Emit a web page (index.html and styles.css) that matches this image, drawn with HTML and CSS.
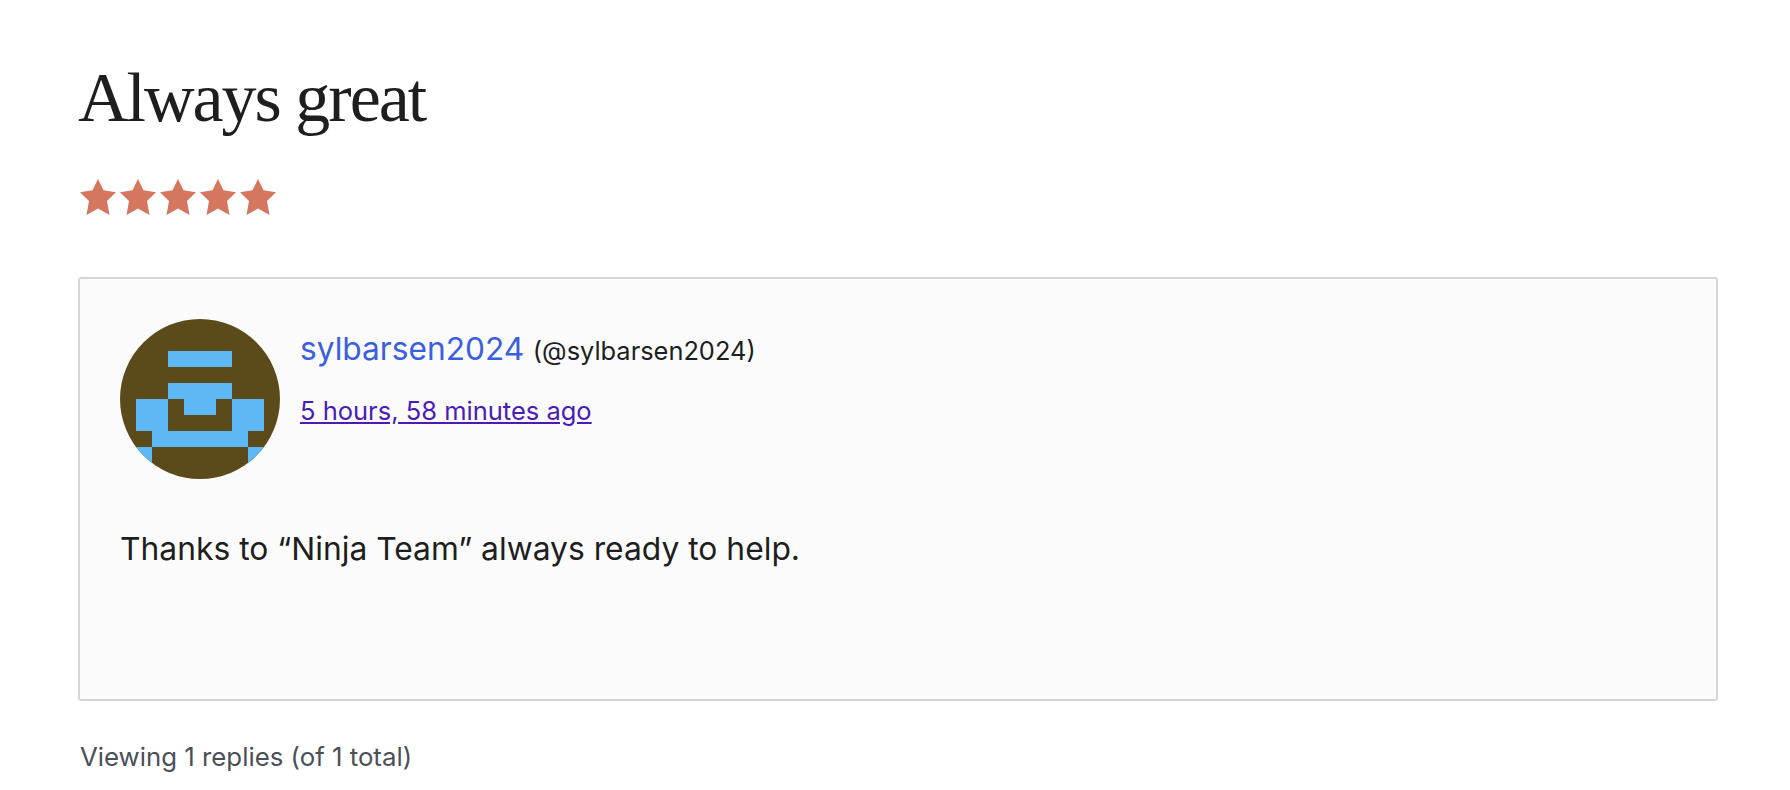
FILE: index.html
```html
<!DOCTYPE html>
<html lang="en">
<head>
    <meta charset="UTF-8">
    <meta name="viewport" content="width=device-width, initial-scale=1.0">
    <title>Always great</title>
    <link rel="stylesheet" href="styles.css">
</head>
<body>
    <div class="topic">
        <h1 class="topic-title">Always great</h1>
        <div class="stars">
            <svg class="star" viewBox="0 0 36 36"><path d="M18 0L23.5 11.2 36 13.2 27 22 29.5 36 18 29.5 6.5 36 9 22 0 13.2 12.5 11.2z"/></svg>
            <svg class="star" viewBox="0 0 36 36"><path d="M18 0L23.5 11.2 36 13.2 27 22 29.5 36 18 29.5 6.5 36 9 22 0 13.2 12.5 11.2z"/></svg>
            <svg class="star" viewBox="0 0 36 36"><path d="M18 0L23.5 11.2 36 13.2 27 22 29.5 36 18 29.5 6.5 36 9 22 0 13.2 12.5 11.2z"/></svg>
            <svg class="star" viewBox="0 0 36 36"><path d="M18 0L23.5 11.2 36 13.2 27 22 29.5 36 18 29.5 6.5 36 9 22 0 13.2 12.5 11.2z"/></svg>
            <svg class="star" viewBox="0 0 36 36"><path d="M18 0L23.5 11.2 36 13.2 27 22 29.5 36 18 29.5 6.5 36 9 22 0 13.2 12.5 11.2z"/></svg>
        </div>
        <div class="reply">
            <div class="reply-head">
                <svg class="avatar" viewBox="0 0 10 10" shape-rendering="crispEdges">
                    <rect width="10" height="10" fill="#5c4b1a"/>
                    <g fill="#5eb8f5">
                        <rect x="3" y="2" width="4" height="1"/>
                        <rect x="3" y="4" width="4" height="1"/>
                        <rect x="1" y="5" width="2" height="2"/>
                        <rect x="4" y="5" width="2" height="1"/>
                        <rect x="7" y="5" width="2" height="2"/>
                        <rect x="2" y="7" width="6" height="1"/>
                        <rect x="1" y="8" width="1" height="1"/>
                        <rect x="8" y="8" width="1" height="1"/>
                    </g>
                </svg>
                <div class="reply-meta">
                    <div class="author">
                        <a class="author-name" href="#">sylbarsen2024</a>
                        <span class="author-handle">(@sylbarsen2024)</span>
                    </div>
                    <a class="reply-time" href="#">5 hours, 58 minutes ago</a>
                </div>
            </div>
            <p class="reply-text">Thanks to “Ninja Team” always ready to help.</p>
        </div>
        <p class="count">Viewing 1 replies (of 1 total)</p>
    </div>
</body>
</html>
```

FILE: styles.css
```css
body {
    margin: 0;
    background: #fff;
    color: #1e1e1e;
    font-family: "Inter", sans-serif;
    overflow: hidden;
}
.topic {
    padding: 52px 72px 0 78px;
}
.topic-title {
    margin: 0;
    font-family: "Liberation Serif", serif;
    font-size: 70px;
    font-weight: 400;
    line-height: 92px;
    letter-spacing: -2px;
}
.stars {
    display: flex;
    gap: 4px;
    margin-top: 35px;
    padding-left: 2px;
}
.star {
    width: 36px;
    height: 36px;
    fill: #d5775e;
}
.reply {
    height: 424px;
    margin-top: 62px;
    padding: 40px;
    box-sizing: border-box;
    background: #fbfbfb;
    border: 2px solid #d6d6d6;
    border-radius: 3px;
}
.reply-head {
    display: flex;
    gap: 20px;
}
.avatar {
    width: 160px;
    height: 160px;
    border-radius: 50%;
}
.reply-meta {
    padding-top: 12px;
}
.author {
    line-height: 36px;
}
.author-name {
    color: #3b5fe0;
    font-size: 31.7px;
    text-decoration: none;
}
.author-handle {
    margin-left: 4px;
    font-size: 25.4px;
}
.reply-time {
    display: inline-block;
    margin-top: 23px;
    color: #4a1bb8;
    font-size: 25.5px;
}
.reply-text {
    margin: 48px 0 0;
    font-size: 31.8px;
    line-height: 44px;
}
.count {
    margin: 40px 0 0 2px;
    color: #4b4f58;
    font-size: 25.8px;
}
```
